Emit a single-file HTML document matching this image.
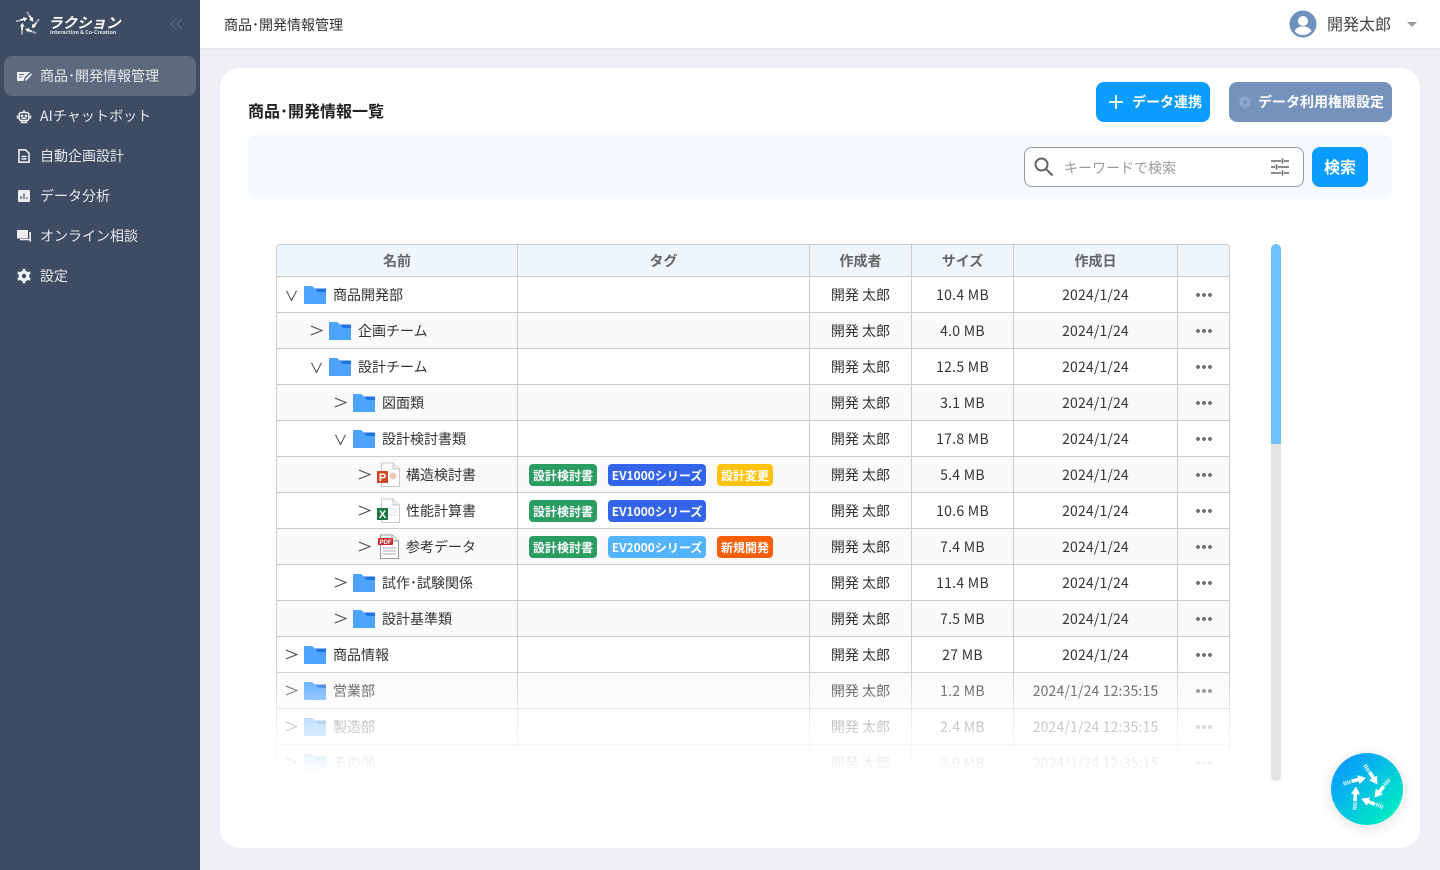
<!DOCTYPE html>
<html lang="ja"><head><meta charset="utf-8"><title>商品･開発情報管理</title>
<style>
*{box-sizing:border-box}
html,body{margin:0;padding:0;width:1440px;height:870px;overflow:hidden;background:#eef0f5;font-family:"Noto Sans CJK JP","Liberation Sans",sans-serif;color:#333}
.a{position:absolute}
#side{left:0;top:0;width:200px;height:870px;background:#3e4c63}
.m{position:absolute;left:4px;width:192px;height:40px;border-radius:8px;color:#e6e8ec;font-size:14px;line-height:40px;padding-left:36px;white-space:nowrap}
.m svg{position:absolute;left:12px;top:12px}
#hdr{left:200px;top:0;width:1240px;height:48px;background:#fff;box-shadow:0 1px 3px rgba(0,0,0,.06)}
#card{left:220px;top:68px;width:1200px;height:780px;background:#fff;border-radius:20px}
.btn{position:absolute;border-radius:8px;color:#fff;font-weight:700;font-size:14px;text-align:center;white-space:nowrap}
#tbl{left:276px;top:244px;width:954px;height:537px;overflow:hidden}
.r{position:absolute;left:0;width:954px;height:37px;border:1px solid #ccc;border-top:1px solid #ccc;display:grid;grid-template-columns:240px 292px 102px 102px 164px 51px;font-size:14px;line-height:37px;background:#fff}
.r.e{background:#fafafa}
.r>div{border-left:1px solid #ccc;text-align:center;position:relative;white-space:nowrap}
.r>div:first-child{border-left:0;text-align:left}
.r>div:nth-child(4){letter-spacing:.28px}
.r>div:nth-child(5){letter-spacing:.15px}
.hd{height:33px;top:0;background:#eef5fb;color:#666;font-weight:700;line-height:32px;border-radius:4px 4px 0 0;font-size:14px}
.hd>div:nth-child(n){letter-spacing:0}
.n svg{position:absolute}
.n span{position:absolute;top:0}
.t{position:absolute;top:7px;height:22px;border-radius:4px;color:#fff;font-weight:700;font-size:12px;line-height:23px;text-align:center}
.g{left:11px;width:68px;background:#2a9d63}
.b{left:90px;width:98px;background:#3364ea}
.l{left:90px;width:98px;background:#52b4ff}
.y{left:199px;width:56px;background:#ffc30d}
.o{left:199px;width:56px;background:#f95f0a}
.d{display:block;position:absolute;left:18px;top:16px;width:16px;height:4px;background:radial-gradient(circle at 2px 2px,#777 1.9px,transparent 2.1px) 0 0/6px 4px repeat-x}
</style></head><body>
<svg width="0" height="0" style="position:absolute"><defs>
<symbol id="f" viewBox="0 0 22 18"><path d="M0 1a1 1 0 0 1 1-1H8L11 2.500H22V17a1 1 0 0 1-1 1H1a1 1 0 0 1-1-1Z" fill="#4ea3ff"/><path d="M11 2.500H22V6H14Z" fill="#1f73e0"/></symbol>
<symbol id="cr" viewBox="0 0 13 11"><path d="M.8 1 12 5.500 .8 10" fill="none" stroke="#444" stroke-width="1"/></symbol>
<symbol id="cd" viewBox="0 0 13 11"><path d="M1.500 .8 6.500 10.500 11.500 .8" fill="none" stroke="#444" stroke-width="1"/></symbol>
<g id="ar"><path d="M-2-24 2-17" fill="none" stroke="#fff" stroke-width="4" stroke-dasharray="1 1"/><path d="M2.500-17 7-10" fill="none" stroke="#fff" stroke-width="3.500"/><path d="M10-13.500 2.300-8.500 10.500-4.500Z" fill="#fff"/></g>
</defs></svg>

<div class="a" id="side">
 <svg class="a" style="left:14px;top:10px" width="28" height="28" viewBox="-28 -28 56 56"><use href="#ar"/><use href="#ar" transform="rotate(72)"/><use href="#ar" transform="rotate(144)"/><use href="#ar" transform="rotate(216)"/><use href="#ar" transform="rotate(288)"/></svg>
 <div class="a" style="left:48px;top:10px;color:#fff;font-size:14.500px;font-weight:700;font-style:italic;line-height:26px;white-space:nowrap">ラクション</div>
 <div class="a" style="left:50px;top:29px;color:#dfe3ea;font-size:5.300px;font-weight:700;line-height:7px;white-space:nowrap">Interaction &amp; Co-Creation</div>
 <svg class="a" style="left:170px;top:18px" width="13" height="12" viewBox="0 0 13 12" fill="none" stroke="#5d6a80" stroke-width="1.200"><path d="M6 1 1 6l5 5M12 1 7 6l5 5"/></svg>
 <div class="m" style="top:56px;background:#5d6a7e">商品･開発情報管理<svg width="16" height="16" viewBox="0 0 16 16"><path d="M1 4H14L8.500 9.500 7.500 13H1Z" fill="#eef0f3"/><path d="M3 6.500h5M3 9h3" stroke="#5d6a7e" stroke-width="1"/><path d="M9 13l.6-2.600 5.400-5 1 1-5 5.600Z" fill="#eef0f3"/></svg></div>
 <div class="m" style="top:96px;letter-spacing:.1px">AIチャットボット<svg width="16" height="16" viewBox="0 0 16 16" fill="none" stroke="#eef0f3" stroke-width="1.500"><rect x="3.200" y="4.500" width="9.600" height="8" rx="2"/><path d="M8 2v2.500M1.500 7.500v3M14.500 7.500v3M5.500 12.500v2h5v-2M5.500 10.300h5"/><circle cx="6" cy="7.800" r=".6"/><circle cx="10" cy="7.800" r=".6"/></svg></div>
 <div class="m" style="top:136px">自動企画設計<svg width="16" height="16" viewBox="0 0 16 16" fill="none" stroke="#eef0f3" stroke-width="1.600"><path d="M3 1.800h6.500L13 5.300V14.200H3Z"/><path d="M5.500 8.500h5M5.500 11h5"/></svg></div>
 <div class="m" style="top:176px">データ分析<svg width="16" height="16" viewBox="0 0 16 16"><rect x="2" y="2" width="12" height="12" rx="1" fill="#eef0f3"/><path d="M5 11V8M8 11V5.500M11 11V9.500" stroke="#3e4c63" stroke-width="1.200"/></svg></div>
 <div class="m" style="top:216px">オンライン相談<svg width="16" height="16" viewBox="0 0 16 16"><path d="M1 2h11v8.500H1Z" fill="#eef0f3"/><path d="M13.300 4H15V14.500L12.800 12.200H4V11H13.300Z" fill="#eef0f3"/></svg></div>
 <div class="m" style="top:256px">設定<svg width="16" height="16" viewBox="0 0 16 16"><circle cx="8" cy="8" r="3.900" fill="none" stroke="#eef0f3" stroke-width="3"/><path d="M8 .800v14.400M1.800 4.400l12.400 7.200M1.800 11.600l12.400-7.200" stroke="#eef0f3" stroke-width="2.600"/><circle cx="8" cy="8" r="2.200" fill="#3e4c63"/></svg></div>
</div>

<div class="a" id="hdr">
 <div class="a" style="left:24px;top:0;line-height:50px;font-size:14px;color:#333">商品･開発情報管理</div>
 <svg class="a" style="left:1089px;top:10px" width="28" height="28" viewBox="0 0 28 28"><circle cx="14" cy="14" r="13.500" fill="#6f8fbd"/><circle cx="14" cy="11" r="5" fill="#fff"/><path d="M5.500 21c2-3.500 5-4.500 8.500-4.500s6.500 1 8.500 4.500c-2 2.500-5 4-8.500 4s-6.500-1.500-8.500-4Z" fill="#fff"/></svg>
 <div class="a" style="left:1127px;top:0;line-height:47px;font-size:16px;color:#444;white-space:nowrap">開発太郎</div>
 <div class="a" style="left:1207px;top:22px;width:0;height:0;border:5px solid transparent;border-top:5px solid #999"></div>
</div>

<div class="a" id="card"></div>
<div class="a" style="left:248px;top:97px;font-size:16px;font-weight:700;line-height:26px;color:#222;white-space:nowrap">商品･開発情報一覧</div>
<div class="btn" style="left:1096px;top:82px;width:114px;height:40px;background:#0a9cff;line-height:40px;padding-left:28px;font-size:14px">データ連携<svg class="a" style="left:12px;top:12px" width="16" height="16" viewBox="0 0 16 16"><path d="M8 1v14M1 8h14" stroke="#fff" stroke-width="1.800"/></svg></div>
<div class="btn" style="left:1229px;top:82px;width:163px;height:40px;background:#7592bd;line-height:40px;padding-left:21px;font-size:14px">データ利用権限設定<svg class="a" style="left:8px;top:12px" width="16" height="16" viewBox="0 0 16 16"><circle cx="8" cy="8" r="3.900" fill="none" stroke="#8ba5cb" stroke-width="3"/><path d="M8 1.500v13M2.400 4.750l11.200 6.500M2.400 11.250l11.200-6.500" stroke="#8ba5cb" stroke-width="2.600"/><circle cx="8" cy="8" r="2" fill="#7592bd"/></svg></div>
<div class="a" style="left:248px;top:135px;width:1144px;height:64px;background:#f5fafe;border-radius:8px"></div>
<div class="a" style="left:1024px;top:147px;width:280px;height:40px;background:#fff;border:1px solid #999;border-radius:8px"></div>
<svg class="a" style="left:1034px;top:157px" width="20" height="20" viewBox="0 0 20 20" fill="none" stroke="#666" stroke-width="2"><circle cx="7.500" cy="7.500" r="6"/><path d="M12 12l6.500 6.500"/></svg>
<div class="a" style="left:1064px;top:148px;line-height:40px;font-size:14px;color:#999;white-space:nowrap">キーワードで検索</div>
<svg class="a" style="left:1270px;top:157px" width="20" height="20" viewBox="0 0 20 20" fill="none" stroke="#666" stroke-width="1.600"><path d="M1 4h10M14 4h5M12.500 1.500v5M1 10h4M8 10h11M6.500 7.500v5M1 16h10M14 16h5M12.500 13.500v5"/></svg>
<div class="btn" style="left:1312px;top:147px;width:56px;height:40px;background:#0a9cff;line-height:39px;font-size:16px">検索</div>

<div class="a" id="tbl">
<div class="r hd"><div style="text-align:center">名前</div><div>タグ</div><div>作成者</div><div>サイズ</div><div>作成日</div><div></div></div>

<div class="r" style="top:32px"><div class="n"><svg style="left:8px;top:13px" width="13" height="11"><use href="#cd"/></svg><svg style="left:27px;top:9px" width="22" height="18"><use href="#f"/></svg><span style="left:56px">商品開発部</span></div><div></div><div>開発 太郎</div><div>10.4 MB</div><div>2024/1/24</div><div><i class="d"></i></div></div>

<div class="r e" style="top:68px"><div class="n"><svg style="left:33px;top:12px" width="13" height="11"><use href="#cr"/></svg><svg style="left:52px;top:9px" width="22" height="18"><use href="#f"/></svg><span style="left:81px">企画チーム</span></div><div></div><div>開発 太郎</div><div>4.0 MB</div><div>2024/1/24</div><div><i class="d"></i></div></div>

<div class="r" style="top:104px"><div class="n"><svg style="left:33px;top:13px" width="13" height="11"><use href="#cd"/></svg><svg style="left:52px;top:9px" width="22" height="18"><use href="#f"/></svg><span style="left:81px">設計チーム</span></div><div></div><div>開発 太郎</div><div>12.5 MB</div><div>2024/1/24</div><div><i class="d"></i></div></div>

<div class="r e" style="top:140px"><div class="n"><svg style="left:57px;top:12px" width="13" height="11"><use href="#cr"/></svg><svg style="left:76px;top:9px" width="22" height="18"><use href="#f"/></svg><span style="left:105px">図面類</span></div><div></div><div>開発 太郎</div><div>3.1 MB</div><div>2024/1/24</div><div><i class="d"></i></div></div>

<div class="r" style="top:176px"><div class="n"><svg style="left:57px;top:13px" width="13" height="11"><use href="#cd"/></svg><svg style="left:76px;top:9px" width="22" height="18"><use href="#f"/></svg><span style="left:105px">設計検討書類</span></div><div></div><div>開発 太郎</div><div>17.8 MB</div><div>2024/1/24</div><div><i class="d"></i></div></div>

<div class="r e" style="top:212px"><div class="n"><svg style="left:81px;top:12px" width="13" height="11"><use href="#cr"/></svg><svg style="left:100px;top:5px" width="24" height="25" viewBox="0 0 24 25"><path d="M4.500 1H16L22.500 7V24.500H4.500Z" fill="#fff" stroke="#c8c8c8"/><path d="M16 1V7H22.500" fill="#eee" stroke="#c8c8c8"/><circle cx="16" cy="14" r="3.500" fill="#e8c8b8"/><rect x="0" y="9" width="11" height="12" fill="#d04a25"/><text x="5.500" y="19" font-size="11" font-weight="700" fill="#fff" text-anchor="middle" font-family="Liberation Sans">P</text></svg><span style="left:129px">構造検討書</span></div><div><span class="t g">設計検討書</span><span class="t b">EV1000シリーズ</span><span class="t y">設計変更</span></div><div>開発 太郎</div><div>5.4 MB</div><div>2024/1/24</div><div><i class="d"></i></div></div>

<div class="r" style="top:248px"><div class="n"><svg style="left:81px;top:12px" width="13" height="11"><use href="#cr"/></svg><svg style="left:100px;top:5px" width="24" height="25" viewBox="0 0 24 25"><path d="M4.500 1H16L22.500 7V24.500H4.500Z" fill="#fff" stroke="#c8c8c8"/><path d="M16 1V7H22.500" fill="#eee" stroke="#c8c8c8"/><path d="M13 11h7M13 14h7M13 17h7" stroke="#ddd"/><rect x="0" y="10" width="11" height="12" fill="#1a7a45"/><text x="5.500" y="20" font-size="11" font-weight="700" fill="#fff" text-anchor="middle" font-family="Liberation Sans">X</text></svg><span style="left:129px">性能計算書</span></div><div><span class="t g">設計検討書</span><span class="t b">EV1000シリーズ</span></div><div>開発 太郎</div><div>10.6 MB</div><div>2024/1/24</div><div><i class="d"></i></div></div>

<div class="r e" style="top:284px"><div class="n"><svg style="left:81px;top:12px" width="13" height="11"><use href="#cr"/></svg><svg style="left:99px;top:5px" width="24" height="25" viewBox="0 0 24 25"><path d="M4.500 1H16L22.500 7V24.500H4.500Z" fill="#fff" stroke="#999"/><path d="M16 1V7H22.500" fill="#eee" stroke="#999"/><path d="M7 14h13M7 17h13M7 20h13" stroke="#aaa"/><rect x="2" y="4" width="15" height="7" rx="1" fill="#c9252b"/><text x="9.500" y="10" font-size="6" font-weight="700" fill="#fff" text-anchor="middle" font-family="Liberation Sans">PDF</text></svg><span style="left:129px">参考データ</span></div><div><span class="t g">設計検討書</span><span class="t l">EV2000シリーズ</span><span class="t o">新規開発</span></div><div>開発 太郎</div><div>7.4 MB</div><div>2024/1/24</div><div><i class="d"></i></div></div>

<div class="r" style="top:320px"><div class="n"><svg style="left:57px;top:12px" width="13" height="11"><use href="#cr"/></svg><svg style="left:76px;top:9px" width="22" height="18"><use href="#f"/></svg><span style="left:105px">試作･試験関係</span></div><div></div><div>開発 太郎</div><div>11.4 MB</div><div>2024/1/24</div><div><i class="d"></i></div></div>

<div class="r e" style="top:356px"><div class="n"><svg style="left:57px;top:12px" width="13" height="11"><use href="#cr"/></svg><svg style="left:76px;top:9px" width="22" height="18"><use href="#f"/></svg><span style="left:105px">設計基準類</span></div><div></div><div>開発 太郎</div><div>7.5 MB</div><div>2024/1/24</div><div><i class="d"></i></div></div>

<div class="r" style="top:392px"><div class="n"><svg style="left:8px;top:12px" width="13" height="11"><use href="#cr"/></svg><svg style="left:27px;top:9px" width="22" height="18"><use href="#f"/></svg><span style="left:56px">商品情報</span></div><div></div><div>開発 太郎</div><div>27 MB</div><div>2024/1/24</div><div><i class="d"></i></div></div>

<div class="r e" style="top:428px"><div class="n"><svg style="left:8px;top:12px" width="13" height="11"><use href="#cr"/></svg><svg style="left:27px;top:9px" width="22" height="18"><use href="#f"/></svg><span style="left:56px">営業部</span></div><div></div><div>開発 太郎</div><div>1.2 MB</div><div>2024/1/24 12:35:15</div><div><i class="d"></i></div></div>

<div class="r" style="top:464px"><div class="n"><svg style="left:8px;top:12px" width="13" height="11"><use href="#cr"/></svg><svg style="left:27px;top:9px" width="22" height="18"><use href="#f"/></svg><span style="left:56px">製造部</span></div><div></div><div>開発 太郎</div><div>2.4 MB</div><div>2024/1/24 12:35:15</div><div><i class="d"></i></div></div>

<div class="r e" style="top:500px"><div class="n"><svg style="left:8px;top:12px" width="13" height="11"><use href="#cr"/></svg><svg style="left:27px;top:9px" width="22" height="18"><use href="#f"/></svg><span style="left:56px">その他</span></div><div></div><div>開発 太郎</div><div>8.9 MB</div><div>2024/1/24 12:35:15</div><div><i class="d"></i></div></div>
</div>
<div class="a" style="left:270px;top:664px;width:970px;height:118px;background:linear-gradient(to bottom,rgba(255,255,255,0) 0%,rgba(255,255,255,.25) 20%,rgba(255,255,255,.72) 52%,rgba(255,255,255,.93) 84%,#fff 92%)"></div>

<div class="a" style="left:1271px;top:244px;width:10px;height:537px;background:#e3e3e3;border-radius:5px"></div>
<div class="a" style="left:1271px;top:244px;width:10px;height:200px;background:#6ec1ff;border-radius:5px 5px 0 0"></div>

<div class="a" style="left:1331px;top:753px;width:72px;height:72px;border-radius:50%;background:linear-gradient(135deg,#0a98ff 10%,#00f2bf 92%);box-shadow:0 3px 14px rgba(0,0,0,.12)"></div>
<svg class="a" style="left:1331px;top:753px" width="72" height="72" viewBox="-36 -36 72 72"><use href="#ar"/><use href="#ar" transform="rotate(72)"/><use href="#ar" transform="rotate(144)"/><use href="#ar" transform="rotate(216)"/><use href="#ar" transform="rotate(288)"/></svg>
</body></html>
